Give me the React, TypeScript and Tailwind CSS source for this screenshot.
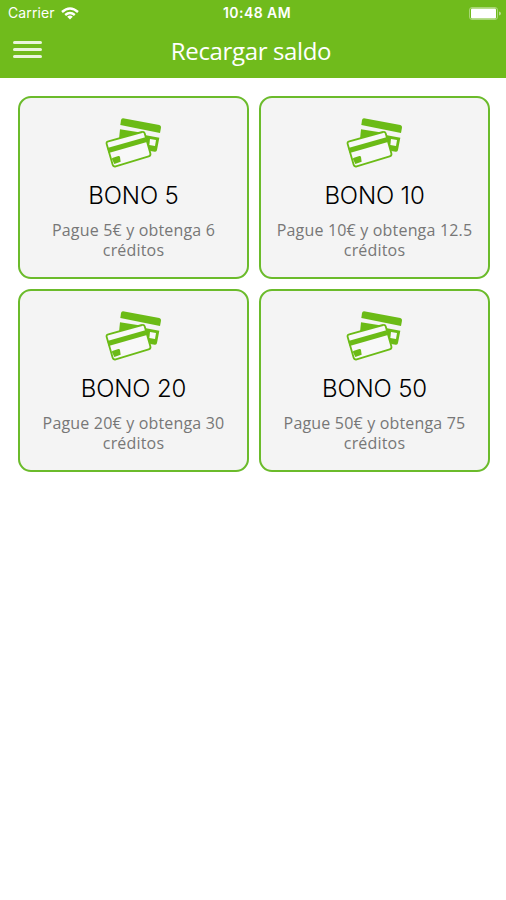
interface Bono {
  title: string;
  description: string;
}

const bonos: Bono[] = [
  { title: 'BONO 5', description: 'Pague 5€ y obtenga 6 créditos' },
  { title: 'BONO 10', description: 'Pague 10€ y obtenga 12.5 créditos' },
  { title: 'BONO 20', description: 'Pague 20€ y obtenga 30 créditos' },
  { title: 'BONO 50', description: 'Pague 50€ y obtenga 75 créditos' },
];

function CardsIcon() {
  return (
    <svg width="62" height="56" viewBox="279 75 186 168" className="text-[#6bbb16]" fill="currentColor">
      {/* Back card */}
      <path d="M339 85L448 105Q454 107 453 113L450 129L331 105L333 90Q334 85 339 85Z" />
      <path d="M330 118L396 128L327 148Z" />
      <path d="M400 134L448 143L441 180Q440 186 434 185L421 183Z" />
      <path d="M420 147L438 150L435 168L418 165Z" fill="#f8f8f8" />
      {/* Front card */}
      <path
        d="M295 154L396 126Q402 124 404 130L421 190Q423 197 416 199L317 229Q310 231 308 224L290 162Q288 156 295 154Z"
        fill="#f8f8f8"
        stroke="currentColor"
        strokeWidth="5.5"
      />
      <path d="M292 174L406 142L411 156L296 189Z" />
      <path d="M309 203L325 198Q329 197 330 201L332 215L313 222L306 208Q305 204 309 203Z" />
    </svg>
  );
}

function StatusBar() {
  return (
    <div className="grid h-[26px] grid-cols-[1fr_auto_1fr] items-center pr-1 pl-2 font-['Inter',sans-serif] text-[14px] leading-none text-white">
      <div className="flex items-center gap-[6px]">
        <span className="tracking-[0.1px]">Carrier</span>
        <svg width="18" height="13" viewBox="0 0 18 13" fill="none" stroke="white" strokeWidth="2.4">
          <path d="M1 5Q9 -2 17 5" />
          <path d="M4.2 8Q9 3.8 13.8 8" />
          <path d="M9 12.5L6.2 9.7Q9 7.4 11.8 9.7Z" fill="white" stroke="none" />
        </svg>
      </div>
      <span className="translate-x-[2px] whitespace-nowrap font-semibold tracking-[0.45px]">10:48 AM</span>
      <div className="flex justify-end">
        <svg width="33" height="13" viewBox="0 0 33 13">
          <rect x="0.5" y="0.5" width="28" height="12" rx="2.5" fill="none" stroke="white" strokeOpacity="0.4" />
          <rect x="2" y="1.5" width="25" height="10" rx="1" fill="white" />
          <path d="M30 4.5Q32 5 32 6.5Q32 8 30 8.5Z" fill="white" fillOpacity="0.5" />
        </svg>
      </div>
    </div>
  );
}

function BonoCard({ title, description }: Bono) {
  return (
    <button
      type="button"
      className="flex h-[183px] flex-col items-center rounded-[13px] border-2 border-[#6bbb2b] bg-[#f4f4f4] px-3 pt-[17px]"
    >
      <CardsIcon />
      <span className="mt-[10px] font-['Inter',sans-serif] text-[24px] leading-[30px] font-light tracking-[-0.15px] text-black">
        {title}
      </span>
      <span className="mt-[9px] font-['Open_Sans',sans-serif] text-[16px] leading-5 tracking-[0.18px] text-[#777]">
        {description}
      </span>
    </button>
  );
}

export default function App() {
  return (
    <div className="min-h-screen bg-white">
      <header className="h-[78px] bg-[#70bb1c]">
        <StatusBar />
        <div className="grid h-[52px] grid-cols-[1fr_auto_1fr] items-center px-[13px]">
          <button type="button" aria-label="Menú" className="flex w-[29px] -translate-y-[3px] flex-col gap-1">
            <span className="h-[3px] rounded-full bg-white/85" />
            <span className="h-[3px] rounded-full bg-white/85" />
            <span className="h-[3px] rounded-full bg-white/85" />
          </button>
          <h1 className="-translate-x-[2px] -translate-y-px font-['Open_Sans',sans-serif] text-[24px] leading-8 tracking-[-0.35px] text-white">
            Recargar saldo
          </h1>
        </div>
      </header>

      <main className="grid grid-cols-2 gap-[10px] pt-[18px] pr-4 pl-[18px]">
        {bonos.map((bono) => (
          <BonoCard key={bono.title} {...bono} />
        ))}
      </main>
    </div>
  );
}
